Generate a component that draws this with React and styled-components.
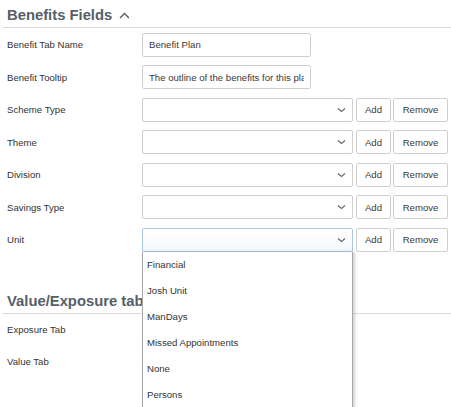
import React from 'react';
import styled, { createGlobalStyle, css } from 'styled-components';

const GlobalStyle = createGlobalStyle`
* {
    margin: 0;
    padding: 0;
    box-sizing: border-box;
}
html, body {
    width: 100%;
    height: 100%;
    overflow: hidden;
}
body {
    font-family: 'Liberation Sans', Arial, sans-serif;
    background: #fff;
    color: #333;
}
`;

const Page = styled.div`
    width: 451px;
    height: 407px;
    padding-left: 3px;
    overflow: hidden;
`;

const Section = styled.section`
    display: flex;
    flex-direction: column;
    gap: ${(p) => p.$gap || 8.5}px;
    margin-top: ${(p) => p.$top || 0}px;
`;

const Heading = styled.h2`
    display: flex;
    align-items: center;
    gap: 7px;
    height: 28px;
    padding: 3px 0 0 4px;
    border-bottom: 1px solid #dcdcdc;
    font-size: 14.8px;
    font-weight: bold;
    color: #565e6a;
    margin-bottom: -4px;
`;

const Row = styled.div`
    display: flex;
    align-items: center;
    height: 24px;
    padding-left: 4px;
`;

const Label = styled.span`
    width: 135px;
    flex-shrink: 0;
    font-size: 9.6px;
    color: #333;
`;

const fieldBase = css`
    height: 24px;
    border: 1px solid #cfcfcf;
    border-radius: 2px;
    background: #fff;
    font-family: inherit;
    font-size: 9.6px;
    color: #3a3a3a;
`;

const TextInput = styled.input`
    ${fieldBase}
    width: 169px;
    padding: 0 6px;
    outline: none;
`;

const SelectWrap = styled.div`
    position: relative;
    width: 211px;
`;

const SelectBox = styled.div`
    ${fieldBase}
    display: flex;
    align-items: center;
    justify-content: flex-end;
    padding-right: 6px;
    ${(p) =>
        p.$open &&
        css`
            border-color: #a9c9e6;
            background: linear-gradient(#fff, #f4f7fa);
        `}
`;

const Button = styled.button`
    ${fieldBase}
    margin-left: ${(p) => p.$gap}px;
    width: ${(p) => p.$w}px;
    cursor: pointer;
`;

const Menu = styled.ul`
    position: absolute;
    top: 24px;
    left: 0;
    width: 211px;
    list-style: none;
    background: #fff;
    border-left: 1px solid #a8a8a8;
    border-right: 1px solid #a8a8a8;
    box-shadow: 2px 0 3px rgba(0, 0, 0, 0.18);
    z-index: 5;
`;

const Option = styled.li`
    height: 26px;
    display: flex;
    align-items: center;
    padding-left: 4px;
    font-size: 9.6px;
    color: #333;
`;

const Chevron = ({ up }) =>
    up ? (
        <svg width="11" height="7" viewBox="0 0 11 7" fill="none">
            <path d="M1 6 L5.5 1.5 L10 6" stroke="#5d6570" strokeWidth="1.5" />
        </svg>
    ) : (
        <svg width="9" height="6" viewBox="0 0 9 6" fill="none">
            <path d="M1 1.5 L4.5 4.5 L8 1.5" stroke="#666" strokeWidth="1.1" />
        </svg>
    );

const unitOptions = ['Financial', 'Josh Unit', 'ManDays', 'Missed Appointments', 'None', 'Persons'];

const SelectRow = ({ label, open }) => (
    <Row>
        <Label>{label}</Label>
        <SelectWrap>
            <SelectBox $open={open}>
                <Chevron />
            </SelectBox>
            {open && (
                <Menu>
                    {unitOptions.map((o) => (
                        <Option key={o}>{o}</Option>
                    ))}
                </Menu>
            )}
        </SelectWrap>
        <Button $gap={3} $w={35}>Add</Button>
        <Button $gap={2} $w={55}>Remove</Button>
    </Row>
);

const App = () => {
    return (
        <>
            <GlobalStyle />
            <Page>
                <Section>
                    <Heading>
                        Benefits Fields <Chevron up />
                    </Heading>
                    <Row>
                        <Label>Benefit Tab Name</Label>
                        <TextInput defaultValue="Benefit Plan" />
                    </Row>
                    <Row>
                        <Label>Benefit Tooltip</Label>
                        <TextInput defaultValue="The outline of the benefits for this plan" />
                    </Row>
                    <SelectRow label="Scheme Type" />
                    <SelectRow label="Theme" />
                    <SelectRow label="Division" />
                    <SelectRow label="Savings Type" />
                    <SelectRow label="Unit" open />
                </Section>
                <Section $top={34} $gap={8}>
                    <Heading>Value/Exposure tab</Heading>
                    <Row>
                        <Label>Exposure Tab</Label>
                    </Row>
                    <Row>
                        <Label>Value Tab</Label>
                    </Row>
                </Section>
            </Page>
        </>
    );
};

export default App;
